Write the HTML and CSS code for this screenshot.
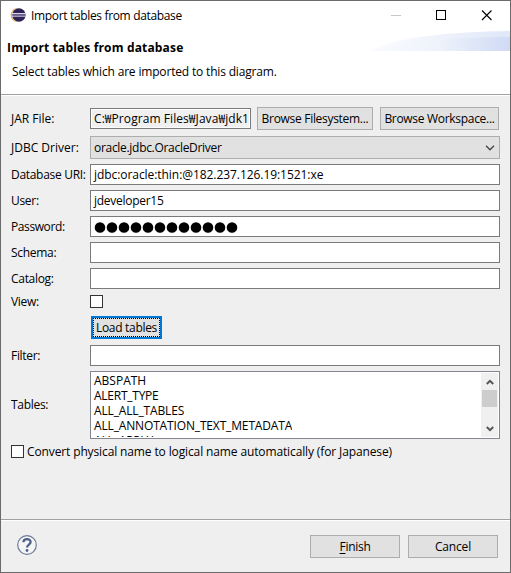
FILE: index.html
```html
<!DOCTYPE html>
<html lang="en">
<head>
<meta charset="utf-8">
<title>Import tables from database</title>
<link rel="stylesheet" href="styles.css">
</head>
<body>
<div class="dialog">
  <header class="titlebar">
    <svg class="logo" width="16" height="16" viewBox="0 0 16 16">
      <circle cx="7.6" cy="8" r="6.900" fill="#f59b2d"/>
      <circle cx="8.700" cy="8" r="7" fill="#fff"/>
      <circle cx="8.9" cy="8" r="6.700" fill="#2c2255"/>
      <path d="M1.8 6.5H15.5M1.8 9.2H15.5" stroke="#d9d6e6" stroke-width="1"/>
      <path d="M1.8 7.9H15.5" stroke="#8f88b3" stroke-width="1"/>
    </svg>
    <span class="title">Import tables from database</span>
    <svg class="controls" width="102" height="12" viewBox="0 0 102 12" fill="none" shape-rendering="crispEdges">
      <path d="M0 5.5h10" stroke="#c8c8c8"/>
      <rect x="45.500" y="0.500" width="9" height="9" stroke="#000"/>
      <path d="M91 0.500l9.500 9.500M100.500 0.500L91 10" stroke="#000" stroke-width="1.100" shape-rendering="auto"/>
    </svg>
  </header>
  <section class="banner">
    <svg class="swoosh" width="140" height="20" viewBox="0 0 140 20">
      <defs>
        <linearGradient id="back"><stop offset="0" stop-color="#fcfdff"/><stop offset="1" stop-color="#dfe7f8"/></linearGradient>
        <linearGradient id="front"><stop offset="0" stop-color="#fafbff"/><stop offset=".5" stop-color="#edf2fb"/><stop offset="1" stop-color="#d0daf4"/></linearGradient>
      </defs>
      <path d="M0 20C25 6 80 1 140 0V20z" fill="url(#back)"/>
      <path d="M0 20C35 11 85 6 140 6V20z" fill="url(#front)"/>
    </svg>
    <h1>Import tables from database</h1>
    <p>Select tables which are imported to this diagram.</p>
  </section>
  <main class="form">
    <div class="row jar">
      <label class="wide">JAR File:</label>
      <div class="field readonly path">C:₩Program Files₩Java₩jdk1</div>
      <button class="browse fs">Browse Filesystem...</button>
      <button class="browse ws">Browse Workspace...</button>
    </div>
    <div class="row driver">
      <label class="wide">JDBC Driver:</label>
      <div class="combo"><span>oracle.jdbc.OracleDriver</span>
        <svg width="10" height="6" viewBox="0 0 10 6"><path d="M1 .8l4 4 4-4" fill="none" stroke="#444" stroke-width="1.300"/></svg>
      </div>
    </div>
    <div class="row"><label>Database URI:</label><div class="field uri">jdbc:oracle:thin:@182.237.126.19:1521:xe</div></div>
    <div class="row"><label>User:</label><div class="field user">jdeveloper15</div></div>
    <div class="row"><label class="tight">Password:</label><div class="field">
      <svg class="dots" width="146" height="11" viewBox="0 0 146 11"><path d="M6 5.500h133" stroke="#000" stroke-width="10.600" stroke-linecap="round" stroke-dasharray="0 12"/></svg>
    </div></div>
    <div class="row"><label>Schema:</label><div class="field"></div></div>
    <div class="row"><label>Catalog:</label><div class="field"></div></div>
    <div class="row view"><label>View:</label><span class="check"></span></div>
    <div class="row load"><button class="default"><span>Load tables</span></button></div>
    <div class="row"><label>Filter:</label><div class="field"></div></div>
    <div class="row tables">
      <label>Tables:</label>
      <div class="list">
        <ul>
          <li class="plain">ABSPATH</li>
          <li class="narrow">ALERT_TYPE</li>
          <li>ALL_ALL_TABLES</li>
          <li>ALL_ANNOTATION_TEXT_METADATA</li>
          <li>ALL_APPLY</li>
        </ul>
        <div class="scrollbar">
          <svg width="8" height="6" viewBox="0 0 8 6"><path d="M.8 5L4 1.800 7.200 5" fill="none" stroke="#555" stroke-width="2"/></svg>
          <div class="thumb"></div>
          <svg class="down" width="8" height="6" viewBox="0 0 8 6"><path d="M.8 1L4 4.200 7.200 1" fill="none" stroke="#555" stroke-width="2"/></svg>
        </div>
      </div>
    </div>
    <div class="convert"><span class="check"></span><span>Convert physical name to logical name automatically (for Japanese)</span></div>
  </main>
  <footer class="actions">
    <svg class="help" width="20" height="20" viewBox="0 0 20 20" fill="none">
      <circle cx="10" cy="10" r="9.300" fill="#f5f5f6" stroke="#6b7c98" stroke-width="1.200"/>
      <path d="M6.400 7.300C6.500 3.200 13.600 3.200 13.600 7c0 2.600-3.600 2.700-3.600 5.600" stroke="#4d6288" stroke-width="2.300"/>
      <circle cx="10" cy="15.500" r="1.400" fill="#4d6288"/>
    </svg>
    <button class="finish"><u>F</u>inish</button>
    <button class="cancel">Cancel</button>
  </footer>
</div>
</body>
</html>
```
FILE: styles.css
```css
* { box-sizing: border-box; }

body {
  margin: 0;
  font: 12px/16px "Open Sans", "Noto Sans CJK KR", sans-serif;
  color: #000;
}

.dialog {
  display: flex;
  flex-direction: column;
  width: 511px;
  height: 573px;
  border: 1px solid #6b6b6b;
  background: #efefef;
}

.titlebar {
  display: flex;
  height: 30px;
  padding: 6px 17px 0 9px;
  background: #fff;
}
.title { margin: 1px auto 0 5px; letter-spacing: -.34px; }
.controls { margin-top: 3px; }

.banner {
  position: relative;
  height: 64px;
  padding: 8px 0 0 6px;
  background: #fff;
  border-bottom: 1px solid #a0a0a0;
  box-shadow: 0 1px #fff;
}
.swoosh { position: absolute; top: 0; right: 0; }
h1 { margin: 0; font-size: 12px; line-height: 18px; letter-spacing: .16px; position: relative; }
p { margin: 7px 0 0 5px; line-height: 16px; letter-spacing: -.17px; }

.form { flex: 1; padding: 12px 10px 0; }

.row {
  display: grid;
  grid-template-columns: 79px 410px;
  align-items: center;
  height: 21px;
  margin-bottom: 5px;
}
label { letter-spacing: -.3px; white-space: nowrap; }
label.wide { letter-spacing: 0; }
label.tight { letter-spacing: -.4px; }

.field {
  height: 21px;
  padding: 1px 3px 0;
  line-height: 17px;
  border: 1px solid #7a7a7a;
  background: #fff;
  white-space: nowrap;
  overflow: hidden;
}
.readonly { background: #f0f0f0; box-shadow: inset 0 0 0 1px #fff; }
.path { letter-spacing: .07px; }
.uri { letter-spacing: -.06px; }
.user { letter-spacing: -.27px; }
.dots { display: block; margin-top: 4px; }

button {
  height: 23px;
  padding: 0;
  border: 1px solid #adadad;
  border-radius: 0;
  background: #e1e1e1;
  font: inherit;
  line-height: 19px;
  color: #000;
  letter-spacing: -.3px;
}

.jar {
  grid-template-columns: 79px 161px 116px 119px;
  height: 23px;
  margin-bottom: 6px;
}
.jar .fs { margin-left: 6px; width: 116px; }
.jar .ws { margin-left: 13px; width: 119px; }

.driver { height: 23px; }
.combo {
  display: flex;
  align-items: center;
  justify-content: space-between;
  height: 23px;
  padding: 0 4px 0 3px;
  border: 1px solid #adadad;
  background: #e1e1e1;
  letter-spacing: -.3px;
}

.check {
  width: 13px;
  height: 13px;
  border: 1px solid #333;
  background: #fff;
}
.view { height: 15px; line-height: 13px; margin: 0 0 7px; }
.load { grid-template-columns: 71px; height: 23px; margin: 0 0 6px 80px; }
.default { padding: 0; border: 2px solid #0078d7; }
.default span { display: block; height: 19px; border: 1px dotted #000; line-height: 18px; }

.tables { height: 68px; margin-bottom: 6px; }
.list {
  display: flex;
  justify-content: space-between;
  height: 68px;
  padding: 1px;
  border: 1px solid #828790;
  background: #fff;
  overflow: hidden;
}
ul { height: 64px; margin: 0; padding: 0 0 0 2px; list-style: none; overflow: hidden; }
li { height: 15px; line-height: 15px; letter-spacing: -.15px; }
.plain { letter-spacing: 0; }
.narrow { letter-spacing: -.25px; }
.scrollbar {
  display: flex;
  flex-direction: column;
  align-items: center;
  width: 17px;
  padding-top: 6px;
  background: #f0f0f0;
}
.thumb { width: 15px; height: 17px; margin-top: 5px; background: #cdcdcd; }
.down { margin-top: 19px; }

.convert { display: flex; gap: 3px; align-items: center; height: 13px; letter-spacing: -.125px; }

.actions {
  display: flex;
  height: 53px;
  padding: 15px 12px 0 16px;
  border-top: 1px solid #a0a0a0;
  box-shadow: inset 0 1px #fff;
}
.help { margin-right: auto; }
.finish, .cancel { width: 90px; }
.cancel { margin-left: 8px; letter-spacing: -.15px; }
u { text-underline-offset: 2px; }
```
